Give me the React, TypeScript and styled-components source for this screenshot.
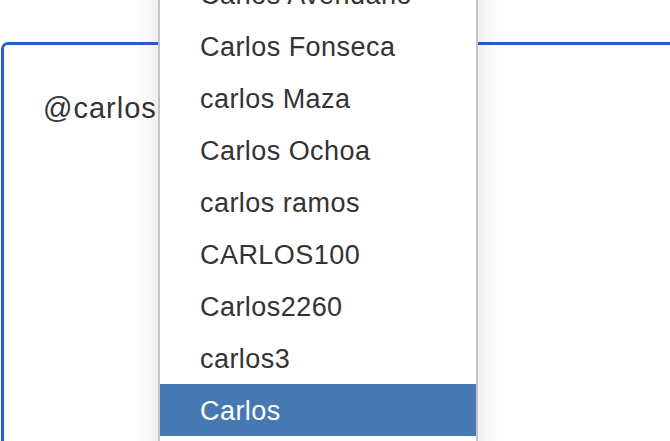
import React from "react";
import styled, { createGlobalStyle } from "styled-components";

const Global = createGlobalStyle`
  html, body { margin: 0; padding: 0; background: #ffffff; overflow: hidden; }
  body { font-family: "Liberation Sans", Arial, sans-serif; }
  #root { width: 670px; height: 441px; overflow: hidden; }
`;

const Page = styled.div`
  position: relative;
  width: 670px;
  height: 441px;
  overflow: hidden;
  background: #ffffff;
  padding: 42px 0 0 1px;
  box-sizing: border-box;
`;

const Editor = styled.div`
  width: 720px;
  height: 460px;
  box-sizing: border-box;
  border: 3px solid #2760c8;
  border-radius: 7px;
  padding: 47px 0 0 39px;
  font-size: 29px;
  line-height: 32px;
  color: #333333;
  letter-spacing: 1px;
`;

const Menu = styled.ul`
  position: absolute;
  left: 158px;
  top: -32px;
  width: 320px;
  margin: 0;
  padding: 0 0 30px;
  list-style: none;
  background: #ffffff;
  border: 2px solid #c4c4c4;
  border-top: none;
  box-sizing: border-box;
  box-shadow: 0 6px 26px rgba(0, 0, 0, 0.13);
`;

const Item = styled.li<{ $active?: boolean }>`
  height: 52px;
  display: flex;
  align-items: center;
  padding-left: 40px;
  padding-top: 2px;
  box-sizing: border-box;
  font-size: 27px;
  letter-spacing: 0.45px;
  color: ${(p) => (p.$active ? "#ffffff" : "#333333")};
  background: ${(p) => (p.$active ? "#4679b2" : "transparent")};
`;

const names = [
  "Carlos Avendaño",
  "Carlos Fonseca",
  "carlos Maza",
  "Carlos Ochoa",
  "carlos ramos",
  "CARLOS100",
  "Carlos2260",
  "carlos3",
  "Carlos",
];

export default function App() {
  return (
    <>
      <Global />
      <Page>
        <Editor>@carlos</Editor>
        <Menu>
          {names.map((n, i) => (
            <Item key={n} $active={i === names.length - 1}>
              {n}
            </Item>
          ))}
        </Menu>
      </Page>
    </>
  );
}
